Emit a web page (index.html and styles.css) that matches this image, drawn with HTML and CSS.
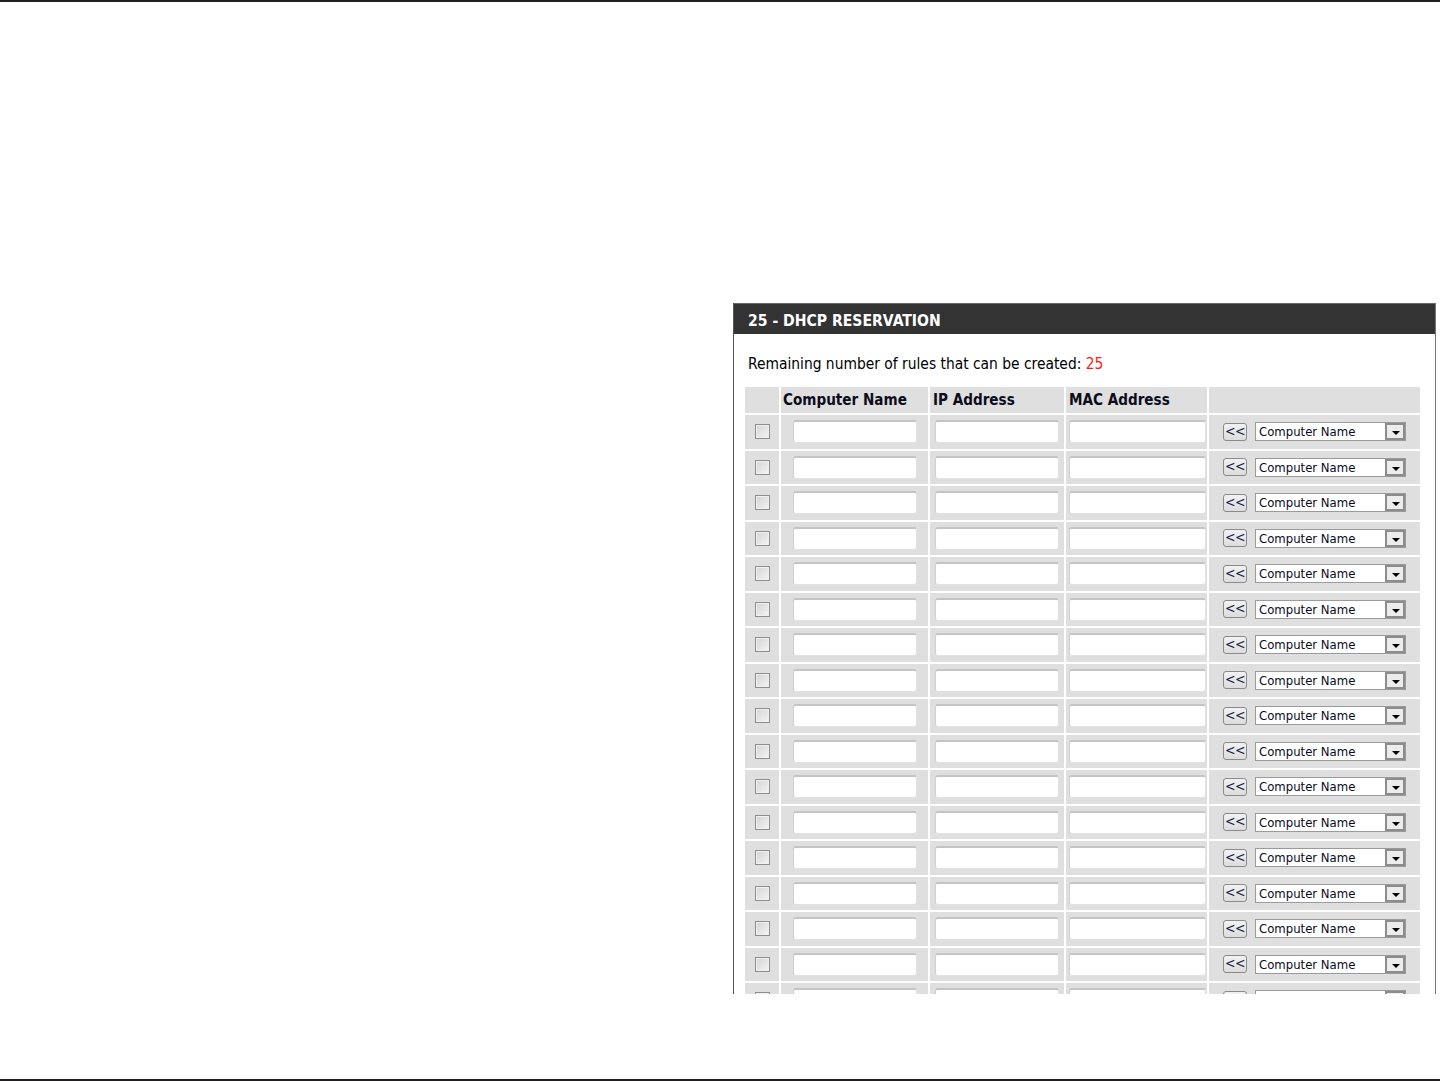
FILE: index.html
```html
<!DOCTYPE html>
<html lang="en">
<head>
<meta charset="utf-8">
<title>DHCP Reservation</title>
<link rel="stylesheet" href="styles.css">
</head>
<body>
<div class="rule"></div>
<div class="page">
  <div class="panel">
    <div class="panel-head">25 - DHCP RESERVATION</div>
    <div class="panel-body">
      <p class="intro">Remaining number of rules that can be created: <span class="count">25</span></p>
      <div class="grid" id="grid">
        <div class="cell hcell"></div>
        <div class="cell hcell p2">Computer Name</div>
        <div class="cell hcell p3">IP Address</div>
        <div class="cell hcell p3">MAC Address</div>
        <div class="cell hcell"></div>
      </div>
    </div>
  </div>
</div>
<div class="rule"></div>
<script src="script.js"></script>
</body>
</html>
```
FILE: script.js
```js
(function () {
  var grid = document.getElementById('grid');
  var html = '';
  for (var i = 0; i < 17; i++) {
    html +=
      '<div class="cell c1"><span class="chk"></span></div>' +
      '<div class="cell c2"><span class="txt w124"></span></div>' +
      '<div class="cell c3"><span class="txt w124"></span></div>' +
      '<div class="cell c4"><span class="txt w137"></span></div>' +
      '<div class="cell c5"><span class="btn">&lt;&lt;</span>' +
      '<span class="sel"><span class="sel-text">Computer Name</span><span class="sel-arrow"></span></span></div>';
  }
  grid.insertAdjacentHTML('beforeend', html);
})();
```
FILE: styles.css
```css
html, body {
  margin: 0;
  padding: 0;
  background: #fff;
}
body {
  font-family: "DejaVu Sans Condensed", "DejaVu Sans", sans-serif;
  color: #000;
}
.rule {
  height: 2px;
  background: #231f20;
}
.page {
  height: 1077px;
  overflow: hidden;
}
.panel {
  margin: 301px 0 0 733px;
  width: 701px;
  height: 691px;
  border-left: 1px solid #555;
  border-right: 1px solid #777;
  overflow: hidden;
  box-sizing: content-box;
}
.panel-head {
  height: 31px;
  background: #333;
  color: #fff;
  font-weight: bold;
  font-size: 15.6px;
  line-height: 34px;
  padding-left: 14px;
  border-top: 1px solid #666;
  box-sizing: border-box;
  overflow: hidden;
}
.panel-body {
  padding: 20px 0 0 9px;
}
.intro {
  margin: 0 0 11px 5px;
  font-size: 15.4px;
  line-height: 20px;
  color: #000;
}
.count {
  color: #ff1a1a;
}
.grid {
  display: grid;
  grid-template-columns: 34px 147px 134px 141px 211px;
  grid-template-rows: 26px;
  grid-auto-rows: 33.5px;
  gap: 2px;
  padding: 2px;
  width: max-content;
  background: #fff;
}
.cell {
  background: #dfdfdf;
  display: flex;
  align-items: center;
}
.hcell {
  font-weight: bold;
  font-size: 15.1px;
  color: #0c0c1a;
}
.p2 { padding-left: 2px; }
.p3 { padding-left: 3px; }
.c1 { justify-content: center; }
.c2 { padding-left: 12px; }
.c3 { padding-left: 5px; }
.c4 { padding-left: 3px; }
.c5 { padding-left: 14px; }
.chk {
  width: 15px;
  height: 15px;
  box-sizing: border-box;
  border: 1px solid #8e8e8e;
  background: linear-gradient(135deg, #d4d4d4 0%, #f4f4f4 100%);
  box-shadow: inset 0 0 0 1px #f0f0f0;
}
.txt {
  display: block;
  height: 23px;
  box-sizing: border-box;
  background: #fff;
  border: 1px solid #e2e2e2;
  border-top: 2px solid #c4c4c4;
  border-left-color: #d0d0d0;
  border-radius: 3px;
}
.w124 { width: 124px; }
.w137 { width: 137px; }
.btn {
  width: 24px;
  height: 18px;
  box-sizing: border-box;
  border: 1px solid #8a8a8a;
  border-radius: 3px;
  background: linear-gradient(#f2f2f2, #dcdcdc);
  font-size: 14px;
  line-height: 15px;
  text-align: center;
  color: #1a1a40;
  letter-spacing: -0.5px;
  margin-right: 8px;
}
.sel {
  width: 151px;
  height: 19px;
  box-sizing: border-box;
  border: 1px solid #9a9a9a;
  background: #fff;
  display: flex;
  align-items: center;
  justify-content: space-between;
}
.sel-text {
  font-size: 13px;
  padding-left: 3px;
  color: #0a0a20;
}
.sel-arrow {
  width: 20px;
  height: 17px;
  box-sizing: border-box;
  border: 2px solid #8c8c8c;
  background: #ececec;
  position: relative;
}
.sel-arrow::after {
  content: "";
  position: absolute;
  left: 5px;
  top: 6px;
  border-left: 4px solid transparent;
  border-right: 4px solid transparent;
  border-top: 4px solid #000;
}
```
